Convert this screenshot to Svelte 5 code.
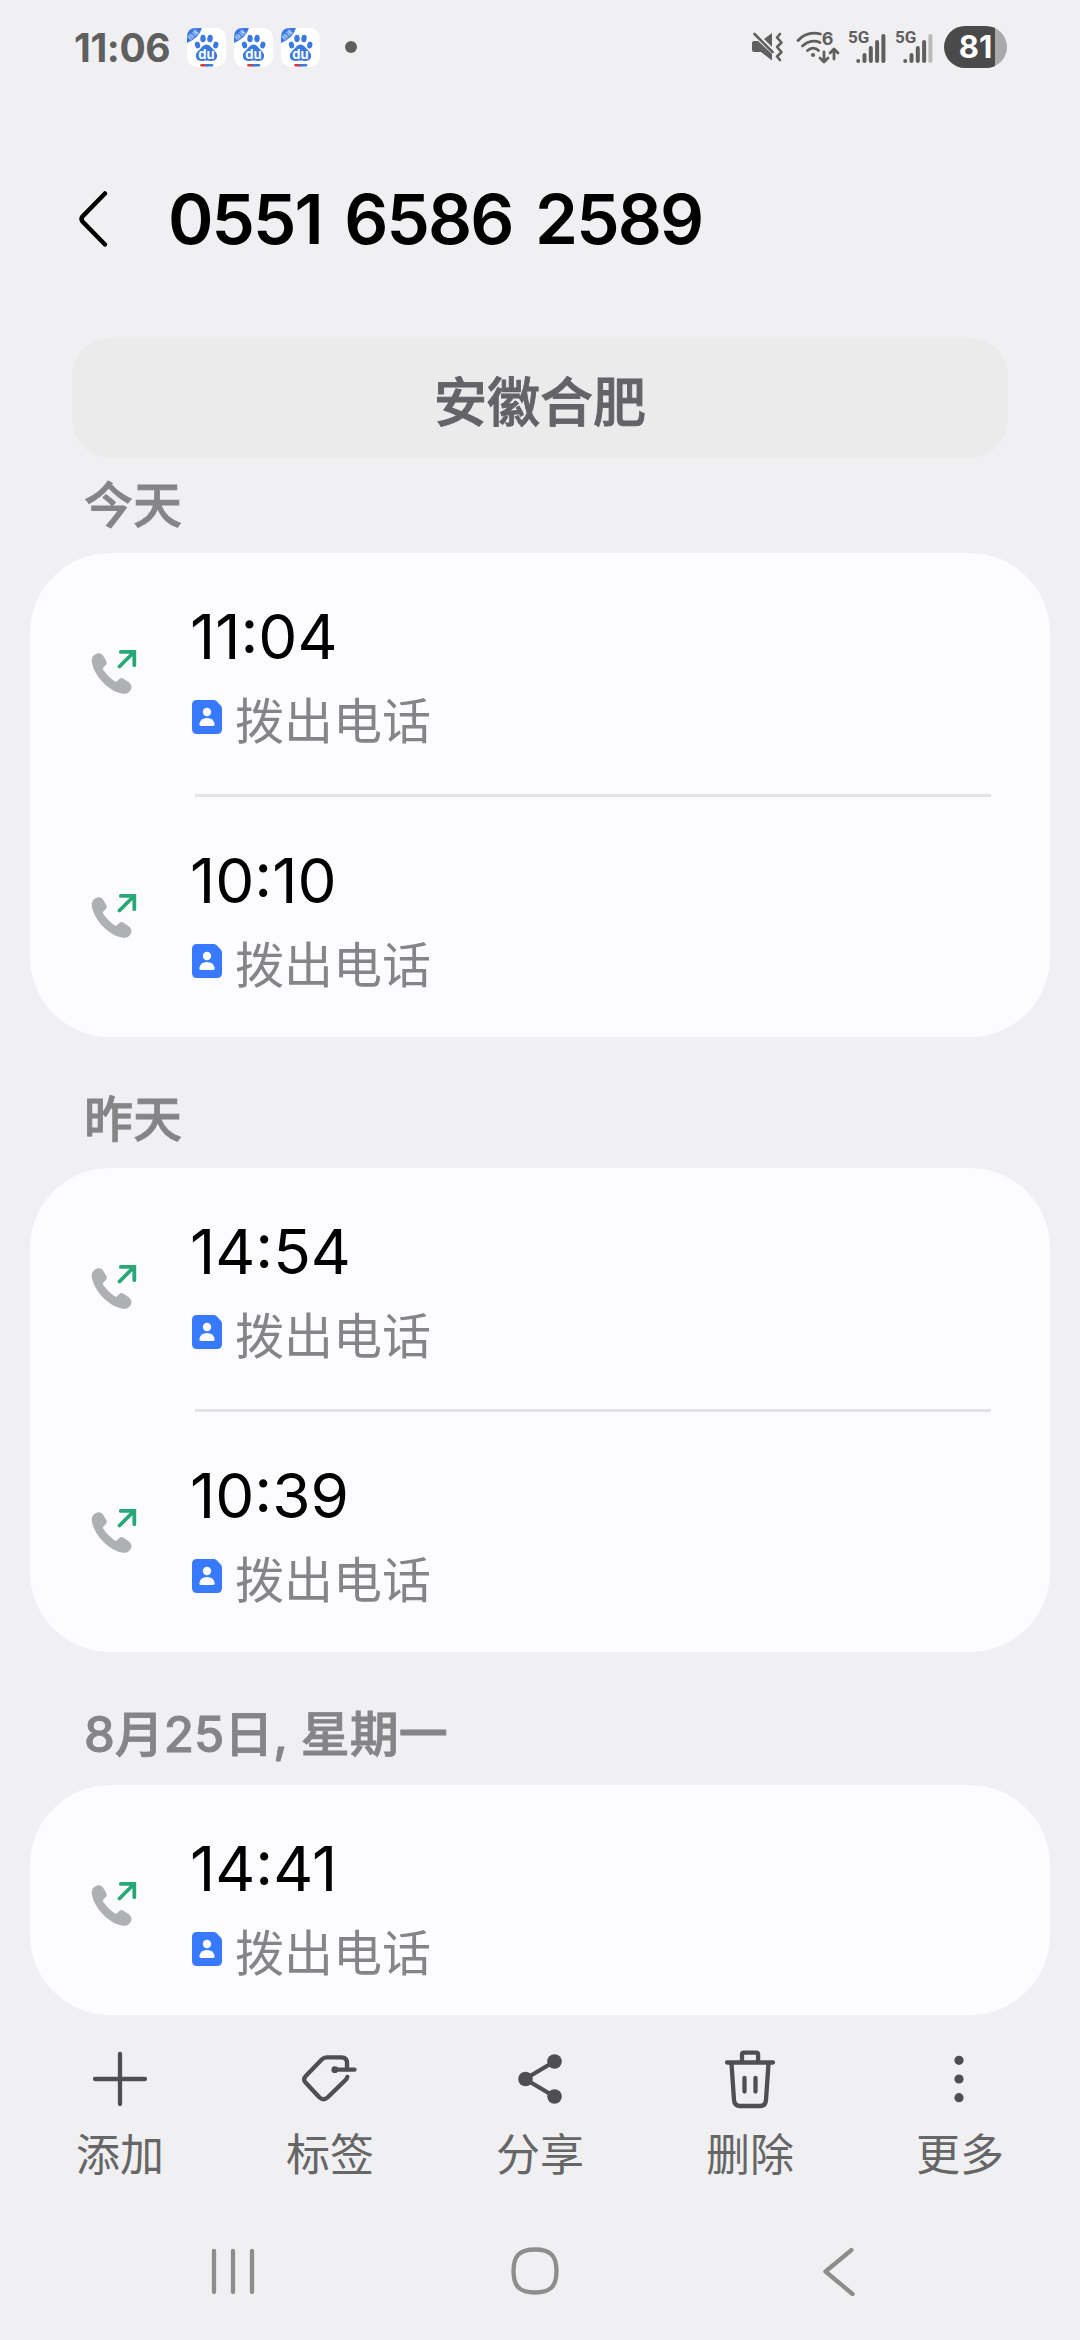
<script lang="ts">
	const number = '0551 6586 2589';
	const location = '安徽合肥';

	const groups = [
		{ label: '今天', calls: ['11:04', '10:10'] },
		{ label: '昨天', calls: ['14:54', '10:39'] },
		{ label: '8月25日, 星期一', calls: ['14:41'] }
	];

	const actions = [
		{ id: 'add', label: '添加' },
		{ id: 'tag', label: '标签' },
		{ id: 'share', label: '分享' },
		{ id: 'delete', label: '删除' },
		{ id: 'more', label: '更多' }
	];

	const notifications = [1, 2, 3];
	const signals = [
		{ id: 'sim1', level: 5 },
		{ id: 'sim2', level: 4 }
	];
	const bars = [4, 10, 17, 23, 29];
</script>

<div class="screen">
	<div class="status">
		<span class="clock">11:06</span>
		<div class="notifications">
			{#each notifications as n (n)}
				<svg class="app" viewBox="0 0 39 39">
					<rect width="39" height="39" rx="10" fill="#fff" />
					<path d="M0 15V9Q0 0 9 0h6Q12 10 0 15z" fill="#3b78e0" />
					<text class="ribbon" transform="translate(7.5 8.5) rotate(-43)">极速</text>
					<g fill="#3b78e0">
						<ellipse cx="10.5" cy="17" rx="2.6" ry="3.4" transform="rotate(-15 10.5 17)" />
						<ellipse cx="16" cy="10.5" rx="2.7" ry="3.8" />
						<ellipse cx="23" cy="10.5" rx="2.7" ry="3.8" transform="rotate(8 23 10.5)" />
						<ellipse cx="28.8" cy="17" rx="2.6" ry="3.4" transform="rotate(12 28.8 17)" />
						<path
							d="M19.5 16.5c3 0 4.4 2.4 6 4.3 2 2.3 4.6 3.7 4.6 7 0 3.4-2.5 5.2-5.3 5.2-2 0-3.2-.6-5.3-.6s-3.3.6-5.3.6c-2.8 0-5.3-1.8-5.3-5.2 0-3.3 2.6-4.7 4.6-7 1.6-1.9 3-4.3 6-4.3z"
						/>
					</g>
					<text class="du" x="19.5" y="30.5">du</text>
					<path d="M14.5 37.2h5" stroke="#d43a3a" stroke-width="2.6" stroke-linecap="round" />
					<path d="M19.5 37.2h5.5" stroke="#3b78e0" stroke-width="2.6" stroke-linecap="round" />
				</svg>
			{/each}
		</div>
		<span class="dot"></span>

		<div class="system">
			<svg class="mute" viewBox="0 0 32 30">
				<path d="M0 11q0-2 2-2h4l14 13v6.5L9 20H2q-2 0-2-2z" fill="#5f5f5f" />
				<path d="M12 7l8-6v14z" fill="#5f5f5f" />
				<path d="M2.5 2l18 18" stroke="#5f5f5f" stroke-width="2.6" stroke-linecap="round" />
				<path
					d="M28 2l-3 3.5 4.5 5-4.5 4.5 4.5 5-4.5 4.5 3 3.5"
					fill="none"
					stroke="#5f5f5f"
					stroke-width="2.6"
					stroke-linecap="round"
					stroke-linejoin="round"
				/>
			</svg>
			<svg class="wifi" viewBox="0 0 44 34">
				<g fill="none" stroke="#5f5f5f" stroke-width="2.8" stroke-linecap="round" stroke-linejoin="round">
					<path d="M2 10.5C8 4 16 2 24.5 4" />
					<path d="M6.5 16c5-5 12-6 17.5-3.5" />
					<path d="M11.5 20.5c3.5-3 8-3 11 0" />
					<path d="M28 22v9.5M24 28l4 4 4-4" />
					<path d="M38 29v-9.5M34 23l4-4 4 4" />
				</g>
				<circle cx="17" cy="25" r="2.1" fill="#5f5f5f" />
				<text class="six" x="31.5" y="15">6</text>
			</svg>
			{#each signals as signal (signal.id)}
				<svg class="signal" viewBox="0 0 38 34">
					<text class="net" x="0" y="13">5G</text>
					{#each bars as h, i}
						<rect
							x={8.2 + i * 6.3}
							y={33 - h}
							width="4"
							height={h}
							rx="2"
							fill={i < signal.level ? '#5f5f5f' : '#b9b9b9'}
						/>
					{/each}
				</svg>
			{/each}
			<div class="battery">81</div>
		</div>
	</div>

	<header class="header">
		<svg class="back" viewBox="0 0 32 60">
			<path d="M28 4.5L5.5 27.5q-2 2.5 0 5L28 55.5" />
		</svg>
		<h1>{number}</h1>
	</header>

	<div class="location">{location}</div>

	<main>
		{#each groups as group}
			<h2>{group.label}</h2>
			<section class="card" class:last={group.calls.length === 1}>
				{#each group.calls as time}
					<article class="call">
						<svg class="phone" viewBox="0 0 46 44">
							<path
								d="M6 .9C8.5.3 10.5 1 12 3.5l3 5c.9 1.7.4 3-.9 4.4l-2 2.2c-.7.8-.6 1.6 0 2.5 3 4.5 7 8.6 11.5 11.3.9.5 1.6.3 2.4-.4l2-1.9c1.5-1.3 2.7-1.3 4.2-.3l4.6 3c3.2 2.1 4.2 5 2.7 7.9-1.6 3.5-5 4.7-9 3.9C16 38 3 22.5.7 10.5-.4 6 1.5 2.2 6 .9z"
								transform="translate(.3 2.5)"
								fill="#aeb0b2"
							/>
							<path
								d="M28.5 16.5L43 2M29.8 1.9H43.3V15.2"
								fill="none"
								stroke="#27a876"
								stroke-width="3.8"
								stroke-linecap="round"
							/>
						</svg>
						<div class="info">
							<div class="time">{time}</div>
							<div class="type">
								<svg class="contact" viewBox="0 0 30 34">
									<path d="M5 0h17q1.5 0 3 1.5l3.7 4Q30 7 30 8.5V29q0 5-5 5H5q-5 0-5-5V5q0-5 5-5z" fill="#387aff" />
									<circle cx="15" cy="12" r="4.2" fill="#fcfcfe" />
									<path d="M9 26q-2 0-1.7-2Q8.5 18 15 18t7.7 6q.3 2-1.7 2z" fill="#fcfcfe" />
								</svg>
								<span>拨出电话</span>
							</div>
						</div>
					</article>
				{/each}
			</section>
		{/each}
	</main>

	<footer class="actions">
		{#each actions as action (action.id)}
			<button class="action">
				<svg class="icon" viewBox="0 0 60 60">
					{#if action.id === 'add'}
						<path d="M30 5v50M5 30h50" />
					{:else if action.id === 'tag'}
						<path
							d="M47 19.5V14q0-5.5-5.5-5.7H26.5q-2.5 0-4.5 2L5.8 27q-3.3 3.5 0 6.8L19.5 48.5q4 3.5 8 0L45 31.5q2-1.8 2.3-3.7M34.5 20.7h20"
						/>
						<circle class="solid" cx="34.8" cy="20.7" r="3.4" />
					{:else if action.id === 'share'}
						<path d="M44.5 12.5L15 30l29.5 17.5" />
						<circle class="solid" cx="15.5" cy="30" r="7.3" />
						<circle class="solid" cx="44.5" cy="12.5" r="7.3" />
						<circle class="solid" cx="44.5" cy="47.5" r="7.3" />
					{:else if action.id === 'delete'}
						<path
							d="M7 13.5h46M22 13V5.5q0-1.8 1.8-1.8h12.5q1.8 0 1.8 1.8V13M11.5 14.5l2.5 36.5q.5 6 6 6h20q5.5 0 6-6l2.5-36.5M24.5 29v13.5M35.5 29v13.5"
						/>
					{:else}
						<circle class="solid" cx="29" cy="11.3" r="4.6" />
						<circle class="solid" cx="29" cy="30" r="4.6" />
						<circle class="solid" cx="29" cy="48.7" r="4.6" />
					{/if}
				</svg>
				<span>{action.label}</span>
			</button>
		{/each}
	</footer>

	<nav class="nav">
		<svg viewBox="0 0 50 50"><path d="M6 5v41M25 5v41M44 5v41" /></svg>
		<svg viewBox="0 0 50 50">
			<path d="M25 3.5c15.5 0 21.5 6 21.5 21.5S40.5 46.5 25 46.5 3.5 40.5 3.5 25 9.5 3.5 25 3.5z" />
		</svg>
		<svg viewBox="0 0 50 50"><path d="M39.5 4L13.5 25.5l27 22.5" /></svg>
	</nav>
</div>

<style>
	:global(body) {
		margin: 0;
		background: #f0f0f3;
	}

	.screen {
		width: 1080px;
		height: 2340px;
		box-sizing: border-box;
		display: flex;
		flex-direction: column;
		overflow: hidden;
		background: #f0f0f3;
		font-family: Inter, 'Noto Sans CJK SC', sans-serif;
	}

	.status {
		height: 94px;
		display: flex;
		align-items: center;
		padding: 0 73px 0 74px;
		box-sizing: border-box;
		color: #5f5f5f;
	}

	.clock {
		width: 113px;
		font-size: 39px;
		font-weight: 700;
		letter-spacing: -0.4px;
	}

	.notifications {
		display: flex;
		gap: 8px;
	}

	.app {
		width: 39px;
		height: 39px;
	}

	.ribbon {
		font-size: 6px;
		fill: #dce8ff;
		text-anchor: middle;
	}

	.du {
		font-size: 13px;
		font-weight: 700;
		fill: #fff;
		text-anchor: middle;
	}

	.dot {
		width: 12px;
		height: 12px;
		margin-left: 25px;
		border-radius: 50%;
		background: #5f5f5f;
	}

	.system {
		display: flex;
		align-items: center;
		margin-left: auto;
	}

	.mute {
		width: 32px;
		height: 30px;
		margin-right: 12px;
	}

	.wifi {
		width: 44px;
		height: 34px;
		margin-right: 8px;
		overflow: visible;
	}

	.six {
		font-size: 18px;
		font-weight: 700;
		fill: #5f5f5f;
		text-anchor: middle;
	}

	.signal {
		width: 38px;
		height: 34px;
		margin-right: 9px;
		overflow: visible;
	}

	.net {
		font-family: Roboto, sans-serif;
		font-size: 17px;
		font-weight: 700;
		fill: #5f5f5f;
	}

	.battery {
		width: 63px;
		height: 42px;
		margin-left: 2px;
		border-radius: 21px;
		background: linear-gradient(90deg, #4a4a4b 51px, #a9a9ab 51px);
		color: #fff;
		font-size: 31px;
		font-weight: 700;
		line-height: 41px;
		text-align: center;
	}

	.header {
		height: 244px;
		display: flex;
		align-items: center;
		padding-left: 77px;
		box-sizing: border-box;
		padding-top: 5px;
	}

	.back {
		width: 32px;
		height: 60px;
		fill: none;
		stroke: #000;
		stroke-width: 4.5;
		stroke-linecap: round;
	}

	h1 {
		margin: 0 0 0 59px;
		font-size: 69px;
		font-weight: 600;
		letter-spacing: -1.9px;
		word-spacing: 7px;
		white-space: nowrap;
	}

	.location {
		height: 120px;
		flex: none;
		margin: 0 72px;
		border-radius: 38px;
		background: #ebebeb;
		color: #636368;
		font-size: 53px;
		font-weight: 500;
		line-height: 130px;
		text-align: center;
		-webkit-text-stroke: 0.9px #636368;
	}

	h2 {
		height: 131px;
		margin: 0;
		padding-left: 84px;
		color: #858587;
		font-size: 49px;
		font-weight: 500;
		line-height: 165px;
		white-space: nowrap;
		-webkit-text-stroke: 0.8px #858587;
	}

	h2:first-child {
		height: 95px;
		line-height: 95px;
	}

	h2:nth-of-type(3) {
		height: 133px;
	}

	.card {
		width: 1020px;
		margin: 0 auto;
		border-radius: 80px;
		background: #fcfcfe;
		overflow: hidden;
	}

	.last {
		height: 230px;
	}

	.call {
		height: 241px;
		display: flex;
		padding: 0 59px 0 61px;
		box-sizing: border-box;
	}

	.call + .call {
		height: 243px;
	}

	.phone {
		width: 46px;
		height: 44px;
		margin-top: 97px;
	}

	.call + .call .phone {
		margin-top: 100px;
	}

	.info {
		flex: 1;
		margin-left: 58px;
		padding-top: 46px;
	}

	.call + .call .info {
		border-top: 3px solid #e3e3e6;
	}

	.time {
		margin-left: -5px;
		color: #000;
		font-size: 62px;
		line-height: 76px;
	}

	.type {
		display: flex;
		align-items: center;
		margin-left: -3px;
		gap: 13px;
		color: #858587;
		font-size: 49px;
		line-height: 94px;
	}

	.contact {
		width: 30px;
		height: 34px;
		margin-bottom: 10px;
	}

	.actions {
		display: flex;
		height: 194px;
		padding: 0 15px;
	}

	.action {
		width: 210px;
		display: flex;
		flex-direction: column;
		align-items: center;
		padding: 34px 0 0;
		border: 0;
		background: none;
		color: #666;
		font-family: inherit;
		font-size: 44px;
		line-height: 93px;
	}

	.icon {
		width: 60px;
		height: 60px;
		flex: none;
		fill: none;
		stroke: #4f4f53;
		stroke-width: 4.3;
		stroke-linecap: round;
		stroke-linejoin: round;
	}

	.solid {
		fill: #4f4f53;
		stroke: none;
	}

	.nav {
		display: flex;
		justify-content: space-between;
		padding: 37px 218px 0 208px;
	}

	.nav svg {
		width: 50px;
		height: 50px;
		fill: none;
		stroke: #8d8d8d;
		stroke-width: 4.3;
		stroke-linecap: round;
		stroke-linejoin: round;
	}
</style>
